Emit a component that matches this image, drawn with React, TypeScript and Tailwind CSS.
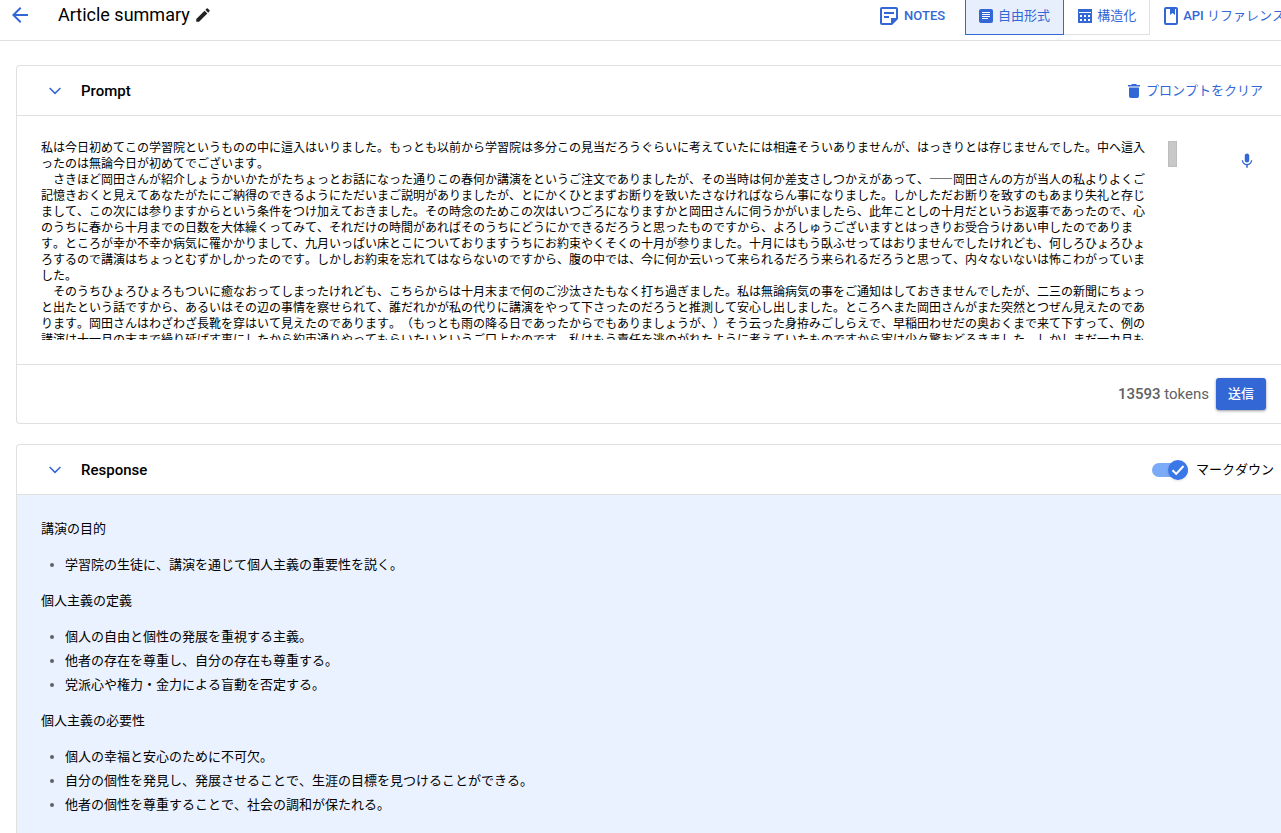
import React, { useState } from 'react';
import { MdArrowBack, MdEdit, MdMic } from 'react-icons/md';

const INITIAL_PROMPT = [
  '私は今日初めてこの学習院というものの中に這入はいりました。もっとも以前から学習院は多分この見当だろうぐらいに考えていたには相違そういありませんが、はっきりとは存じませんでした。中へ這入ったのは無論今日が初めてでございます。',
  '　さきほど岡田さんが紹介しょうかいかたがたちょっとお話になった通りこの春何か講演をというご注文でありましたが、その当時は何か差支さしつかえがあって、――岡田さんの方が当人の私よりよくご記憶きおくと見えてあなたがたにご納得のできるようにただいまご説明がありましたが、とにかくひとまずお断りを致いたさなければならん事になりました。しかしただお断りを致すのもあまり失礼と存じまして、この次には参りますからという条件をつけ加えておきました。その時念のためこの次はいつごろになりますかと岡田さんに伺うかがいましたら、此年ことしの十月だというお返事であったので、心のうちに春から十月までの日数を大体繰くってみて、それだけの時間があればそのうちにどうにかできるだろうと思ったものですから、よろしゅうございますとはっきりお受合うけあい申したのであります。ところが幸か不幸か病気に罹かかりまして、九月いっぱい床とこについておりますうちにお約束やくそくの十月が参りました。十月にはもう臥ふせってはおりませんでしたけれども、何しろひょろひょろするので講演はちょっとむずかしかったのです。しかしお約束を忘れてはならないのですから、腹の中では、今に何か云いって来られるだろう来られるだろうと思って、内々ないないは怖こわがっていました。',
  '　そのうちひょろひょろもついに癒なおってしまったけれども、こちらからは十月末まで何のご沙汰さたもなく打ち過ぎました。私は無論病気の事をご通知はしておきませんでしたが、二三の新聞にちょっと出たという話ですから、あるいはその辺の事情を察せられて、誰だれかが私の代りに講演をやって下さったのだろうと推測して安心し出しました。ところへまた岡田さんがまた突然とつぜん見えたのであります。岡田さんはわざわざ長靴を穿はいて見えたのであります。（もっとも雨の降る日であったからでもありましょうが、）そう云った身拵みごしらえで、早稲田わせだの奥おくまで来て下すって、例の講演は十一月の末まで繰り延ばす事にしたから約束通りやってもらいたいというご口上なのです。私はもう責任を逃のがれたように考えていたものですから実は少々驚おどろきました。しかしまだ一カ月も',
].join('\n');

const sections = [
  {
    title: '講演の目的',
    items: ['学習院の生徒に、講演を通じて個人主義の重要性を説く。'],
  },
  {
    title: '個人主義の定義',
    items: [
      '個人の自由と個性の発展を重視する主義。',
      '他者の存在を尊重し、自分の存在も尊重する。',
      '党派心や権力・金力による盲動を否定する。',
    ],
  },
  {
    title: '個人主義の必要性',
    items: [
      '個人の幸福と安心のために不可欠。',
      '自分の個性を発見し、発展させることで、生涯の目標を見つけることができる。',
      '他者の個性を尊重することで、社会の調和が保たれる。',
    ],
  },
];

const NotesIcon = () => (
  <svg width="18" height="18" viewBox="0 0 18 18" fill="currentColor" aria-hidden="true">
    <path
      fillRule="evenodd"
      d="M2 0h14a2 2 0 0 1 2 2v10l-6 6H2a2 2 0 0 1-2-2V2a2 2 0 0 1 2-2zm0 2v14h9v-5h5V2H2z"
    />
    <path d="M4 5h10v2H4zM4 9h5v2H4z" />
  </svg>
);

const FreeformIcon = () => (
  <svg width="14" height="14" viewBox="0 0 14 14" aria-hidden="true">
    <rect width="14" height="14" rx="2" fill="currentColor" />
    <path d="M3 3.500h8M3 5.500h8M3 7.500h8M3 9.500h6" stroke="#fff" strokeWidth="1" />
  </svg>
);

const StructuredIcon = () => (
  <svg width="14" height="14" viewBox="0 0 14 14" aria-hidden="true">
    <rect width="14" height="14" fill="currentColor" />
    <path
      fill="#fff"
      d="M1 3h12v1H1zM2 6h2v2H2zM6 6h2v2H6zM10 6h2v2h-2zM2 10h2v2H2zM6 10h2v2H6zM10 10h2v2h-2z"
    />
  </svg>
);

const BookIcon = () => (
  <svg width="14" height="18" viewBox="0 0 14 18" aria-hidden="true">
    <rect x="1" y="1" width="12" height="16" rx="1" fill="none" stroke="currentColor" strokeWidth="2" />
    <path d="M6 1h5v7L8.500 6 6 8z" fill="currentColor" />
  </svg>
);

const TrashIcon = () => (
  <svg width="12" height="14" viewBox="0 0 12 14" fill="currentColor" aria-hidden="true">
    <path d="M4 0h4l1 1h3v1.500H0V1h3zM1 3.500h10V12a2 2 0 0 1-2 2H3a2 2 0 0 1-2-2z" />
  </svg>
);

const ChevronIcon = () => (
  <svg width="12" height="8" viewBox="0 0 12 8" fill="none" aria-hidden="true">
    <path d="M0.600 1l5.400 5.400L11.400 1" stroke="currentColor" strokeWidth="1.500" />
  </svg>
);

interface PanelHeaderProps {
  title: string;
  open: boolean;
  onToggle: () => void;
  children: React.ReactNode;
}

const PanelHeader: React.FC<PanelHeaderProps> = ({ title, open, onToggle, children }) => (
  <div className="flex h-[50px] items-center justify-between border-b border-[#e0e0e0] pl-8">
    <button
      type="button"
      aria-expanded={open}
      onClick={onToggle}
      className="flex items-center gap-5 text-[15px] leading-5 font-medium"
    >
      <span className="text-[#3367d6]">
        <ChevronIcon />
      </span>
      {title}
    </button>
    {children}
  </div>
);

export default function App() {
  const [prompt, setPrompt] = useState(INITIAL_PROMPT);
  const [mode, setMode] = useState('freeform');
  const [promptOpen, setPromptOpen] = useState(true);
  const [responseOpen, setResponseOpen] = useState(true);
  const [markdown, setMarkdown] = useState(true);

  const selected = 'border-[#3367d6] bg-[#e8effc]';
  const unselected = 'border-[#e0e0e0] bg-white';

  return (
    <div
      lang="ja"
      className="h-screen overflow-hidden bg-white font-[Roboto,'Noto_Sans_CJK_JP',sans-serif] text-[13px] text-black"
    >
      <header className="flex h-[41px] items-center border-b border-[#e0e0e0] pb-[10px] pl-2">
        <button type="button" aria-label="戻る" className="text-[#3367d6]">
          <MdArrowBack size={24} />
        </button>
        <h1 className="ml-[26px] text-lg leading-6">Article summary</h1>
        <button type="button" aria-label="名前を編集" className="ml-1 text-[#212121]">
          <MdEdit size={18} />
        </button>

        <div className="-mr-1 ml-auto flex items-center whitespace-nowrap text-[#3367d6]">
          <button type="button" className="mt-0.5 mr-5 flex items-center gap-[6px] font-medium">
            <NotesIcon />
            NOTES
          </button>
          <div className="-mb-[10px] flex h-10 items-start">
            <button
              type="button"
              aria-pressed={mode === 'freeform'}
              onClick={() => setMode('freeform')}
              className={`flex h-[35px] items-center gap-[5px] border border-t-0 px-[13px] pb-0.5 ${mode === 'freeform' ? selected : unselected}`}
            >
              <FreeformIcon />
              自由形式
            </button>
            <button
              type="button"
              aria-pressed={mode === 'structured'}
              onClick={() => setMode('structured')}
              className={`flex h-[35px] items-center gap-[5px] border border-t-0 border-l-0 pr-[13px] pb-0.5 pl-[14px] ${mode === 'structured' ? selected : unselected}`}
            >
              <StructuredIcon />
              構造化
            </button>
          </div>
          <a href="#reference" className="mt-0.5 ml-[14px] flex items-center gap-[5px] font-medium">
            <BookIcon />
            <span>
              API <span className="font-normal [font-kerning:none]">リファレンス</span>
            </span>
          </a>
        </div>
      </header>

      <main className="mt-6 ml-4 flex flex-col gap-5">
        <section className="rounded-l border border-r-0 border-[#e0e0e0]">
          <PanelHeader title="Prompt" open={promptOpen} onToggle={() => setPromptOpen(!promptOpen)}>
            <button
              type="button"
              onClick={() => setPrompt('')}
              className="mr-[18px] flex items-center gap-[6px] text-[#3367d6] [font-kerning:none]"
            >
              <TrashIcon />
              プロンプトをクリア
            </button>
          </PanelHeader>

          {promptOpen && (
            <div className="flex items-start border-b border-[#e0e0e0] pt-[23px] pb-6 pl-6">
              <textarea
                aria-label="Prompt"
                value={prompt}
                onChange={(e) => setPrompt(e.target.value)}
                className="h-[201px] flex-1 resize-none overflow-hidden font-['Noto_Sans_CJK_JP',sans-serif] text-xs leading-4 outline-none [font-kerning:none] [text-spacing-trim:space-all]"
              />
              <div className="mt-0.5 ml-3 h-[26px] w-[9px] border border-[#bdbdbd] bg-[#c8c8c8]" />
              <button type="button" aria-label="音声入力" className="mt-[13px] mr-[25px] ml-[61px] text-[#3367d6]">
                <MdMic size={18} />
              </button>
            </div>
          )}

          <div className="flex h-[58px] items-center justify-end gap-[7px] pr-[15px]">
            <p className="text-[15px] text-[#616161]">
              <span className="font-medium">13593</span> tokens
            </p>
            <button
              type="button"
              className="h-8 w-[50px] rounded-[3px] bg-[#3367d6] font-medium text-white shadow-[0_1px_3px_rgba(0,0,0,0.4)]"
            >
              送信
            </button>
          </div>
        </section>

        <section className="rounded-tl border border-r-0 border-[#e0e0e0]">
          <PanelHeader title="Response" open={responseOpen} onToggle={() => setResponseOpen(!responseOpen)}>
            <label className="mr-[7px] flex items-center gap-2 [font-kerning:none]">
              <span className="relative flex h-5 w-9 items-center">
                <input
                  type="checkbox"
                  checked={markdown}
                  onChange={(e) => setMarkdown(e.target.checked)}
                  className="peer h-[14px] w-9 appearance-none rounded-full bg-[#bdbdbd] checked:bg-[#7baaf7]"
                />
                <span className="pointer-events-none absolute left-0 flex size-5 items-center justify-center rounded-full bg-white text-white shadow peer-checked:left-4 peer-checked:bg-[#3b78e7]">
                  <svg width="14" height="12" viewBox="0 0 14 12" fill="none" aria-hidden="true">
                    <path d="M1.500 6.200l3.700 3.700L12.500 2" stroke="currentColor" strokeWidth="2" />
                  </svg>
                </span>
              </span>
              マークダウン
            </label>
          </PanelHeader>

          {responseOpen && (
            <div className="flex min-h-[400px] flex-col gap-3 bg-[#ebf2ff] px-6 pt-[22px] leading-6 [font-kerning:none]">
              {sections.map((section) => (
                <React.Fragment key={section.title}>
                  <h2>{section.title}</h2>
                  <ul className="list-disc pl-6 marker:text-[#5f6368]">
                    {section.items.map((item) => (
                      <li key={item}>{item}</li>
                    ))}
                  </ul>
                </React.Fragment>
              ))}
            </div>
          )}
        </section>
      </main>
    </div>
  );
}
